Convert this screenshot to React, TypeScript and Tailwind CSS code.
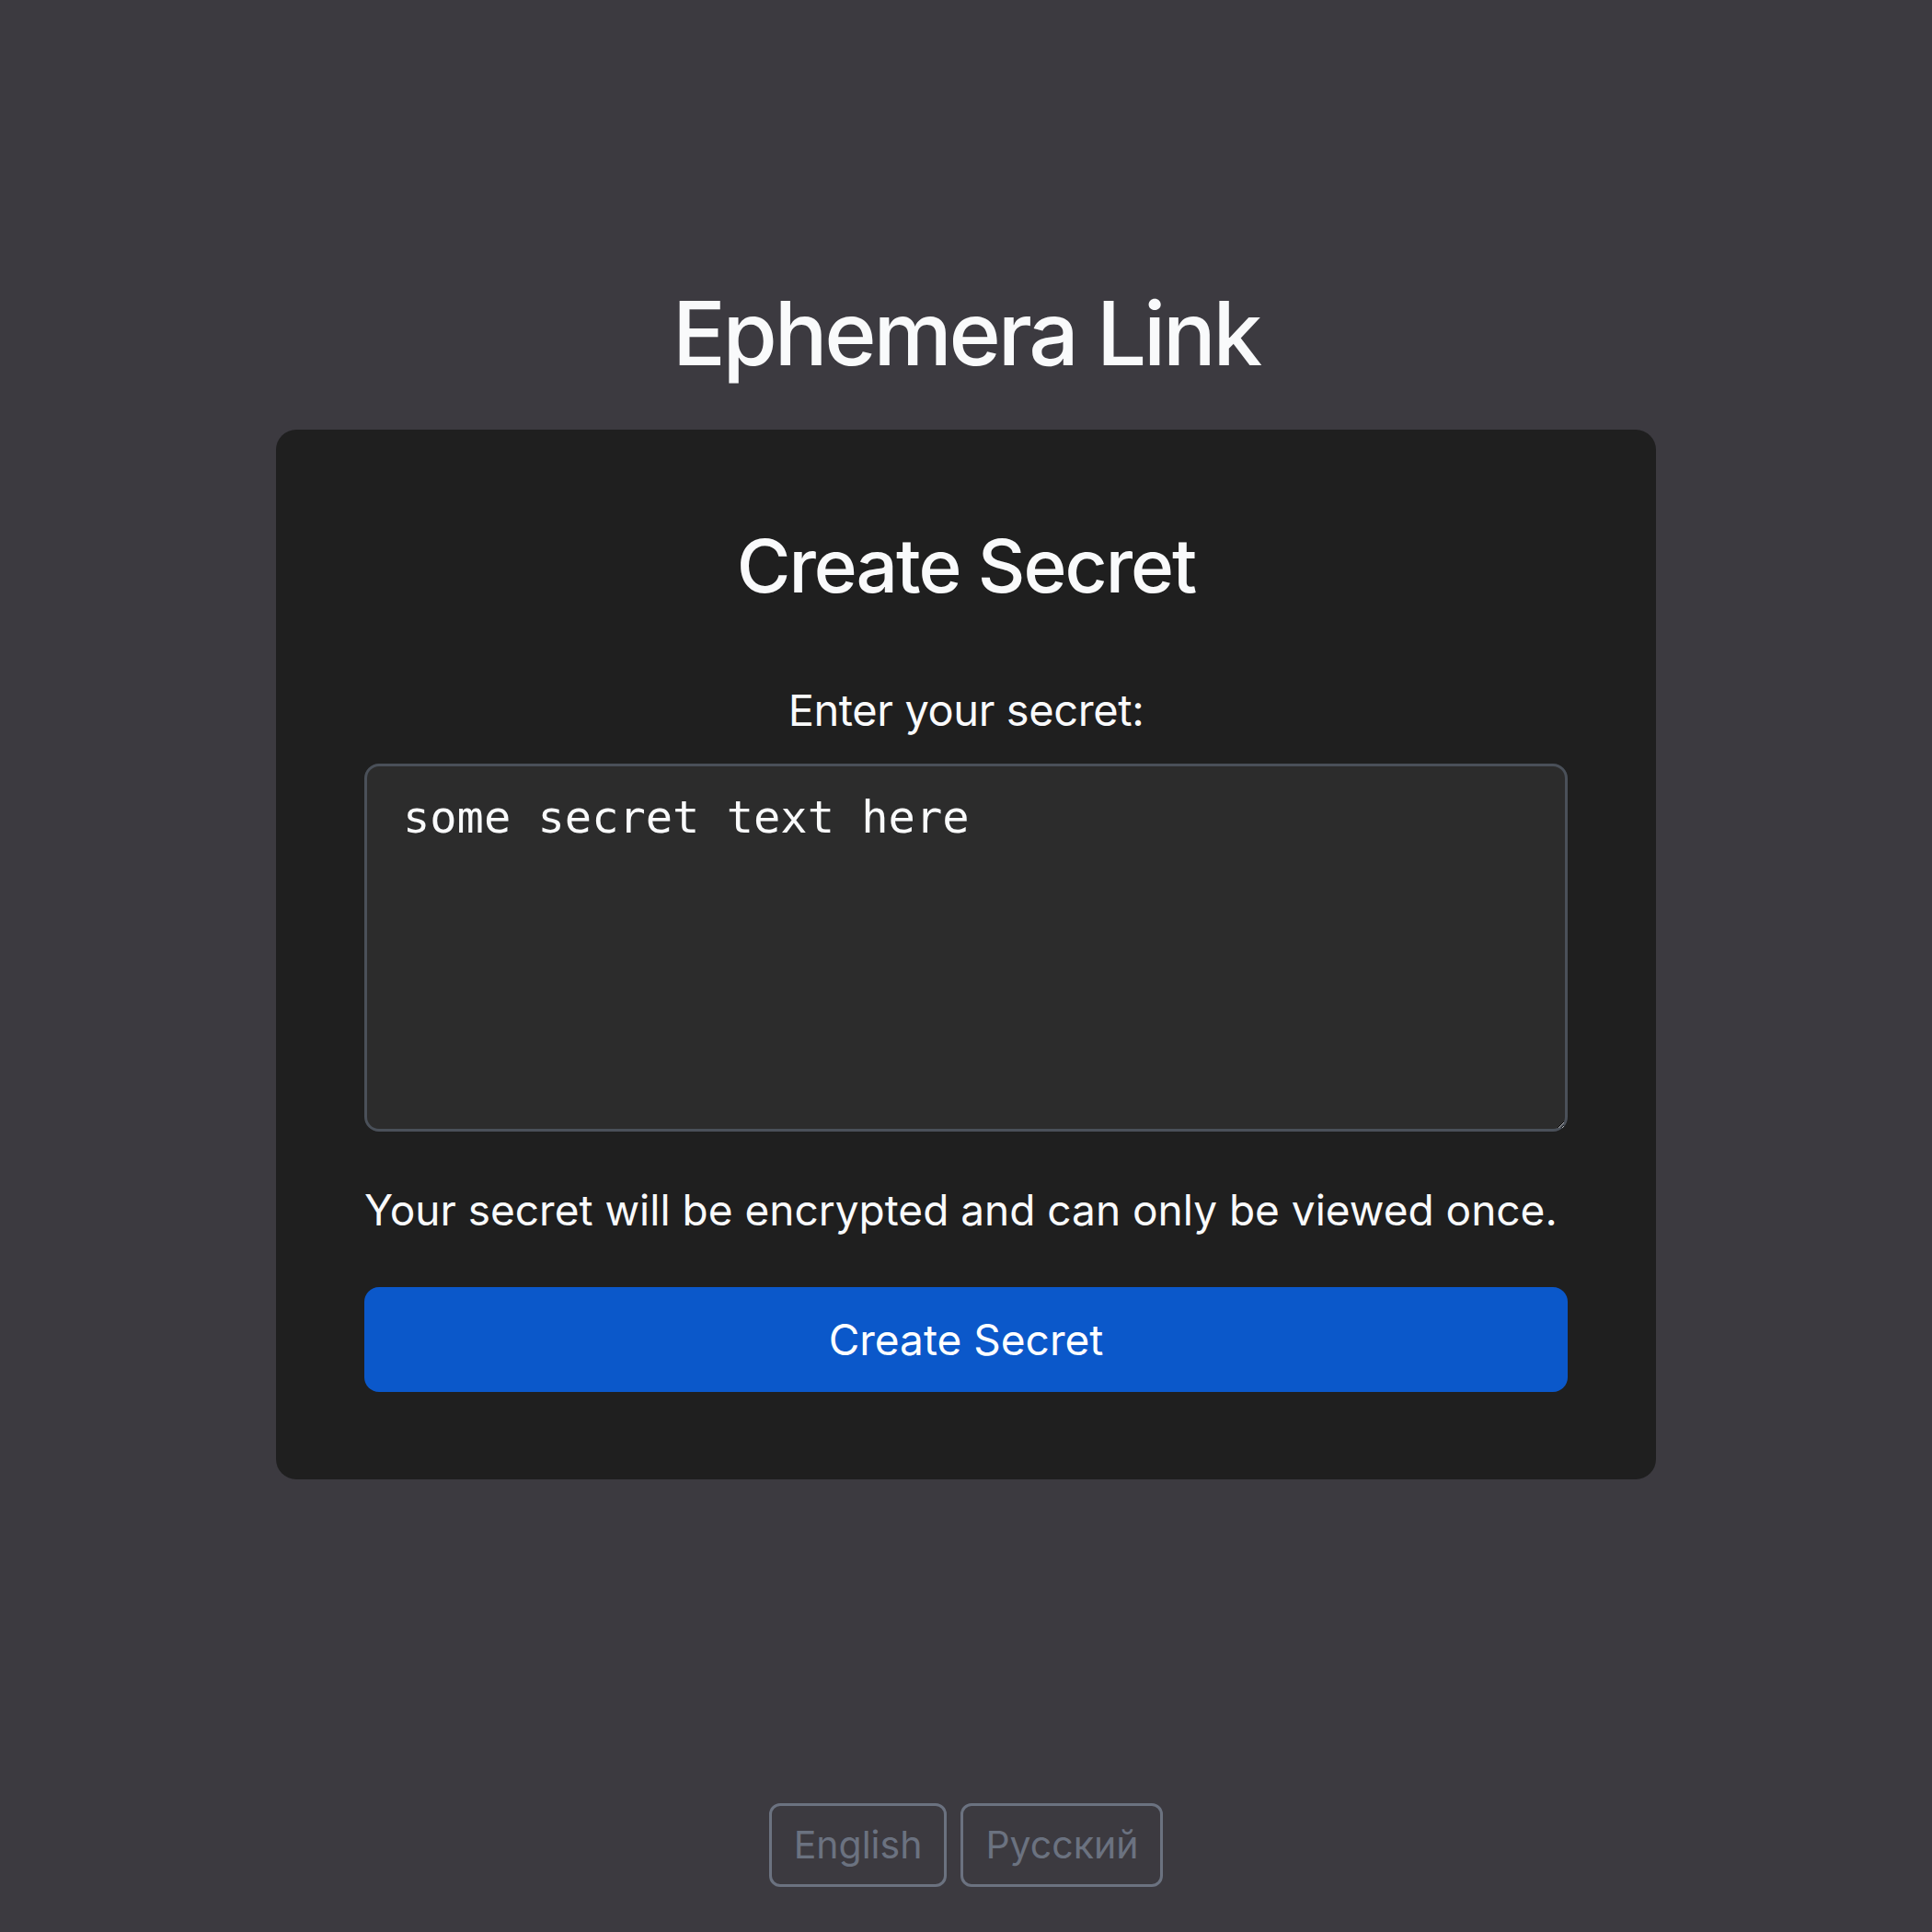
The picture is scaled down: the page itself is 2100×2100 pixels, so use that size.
import React from "react";

export default function App() {
  return (
    <div
      className="w-full h-[2100px] bg-[#3c3a40] flex flex-col items-center text-[#f9fafb]"
      style={{ fontFamily: "Inter, 'Noto Sans', sans-serif" }}
    >
      <h1 className="mt-[314px] text-[96px] leading-none font-medium tracking-[-3.2px]">Ephemera Link</h1>
      <div className="mt-[57px] w-[1500px] bg-[#1f1f1f] rounded-[22px] px-24 pt-[108px] pb-[95px] flex flex-col items-center">
        <h2 className="text-[80px] leading-none font-medium tracking-[-2px]">Create Secret</h2>
        <label className="mt-[93px] text-[47px] leading-none tracking-[-0.4px]">Enter your secret:</label>
        <textarea
          className="mt-[35px] w-full h-[400px] bg-[#2c2c2c] border-[3px] border-[#4a5059] rounded-[16px] pl-[39px] pr-[40px] pt-[24px] text-[48.7px] leading-[1.3] text-[#f9fafb] outline-none"
          style={{ fontFamily: "'DejaVu Sans Mono', monospace" }}
          defaultValue="some secret text here"
        />
        <p className="mt-[62px] w-full text-[46px] leading-none">Your secret will be encrypted and can only be viewed once.</p>
        <button className="mt-[61px] w-full h-[114px] rounded-[16px] bg-[#0b58ca] text-[46px] leading-none text-white">
          Create Secret
        </button>
      </div>
      <div className="mt-auto mb-[49px] flex gap-[15px]">
        <button className="h-[91px] px-[24px] border-[3px] border-[#6b7280] rounded-[12px] text-[41px] leading-none text-[#6b7280]">
          English
        </button>
        <button className="h-[91px] px-[24px] border-[3px] border-[#6b7280] rounded-[12px] text-[41px] leading-none text-[#6b7280]">
          Русский
        </button>
      </div>
    </div>
  );
}
